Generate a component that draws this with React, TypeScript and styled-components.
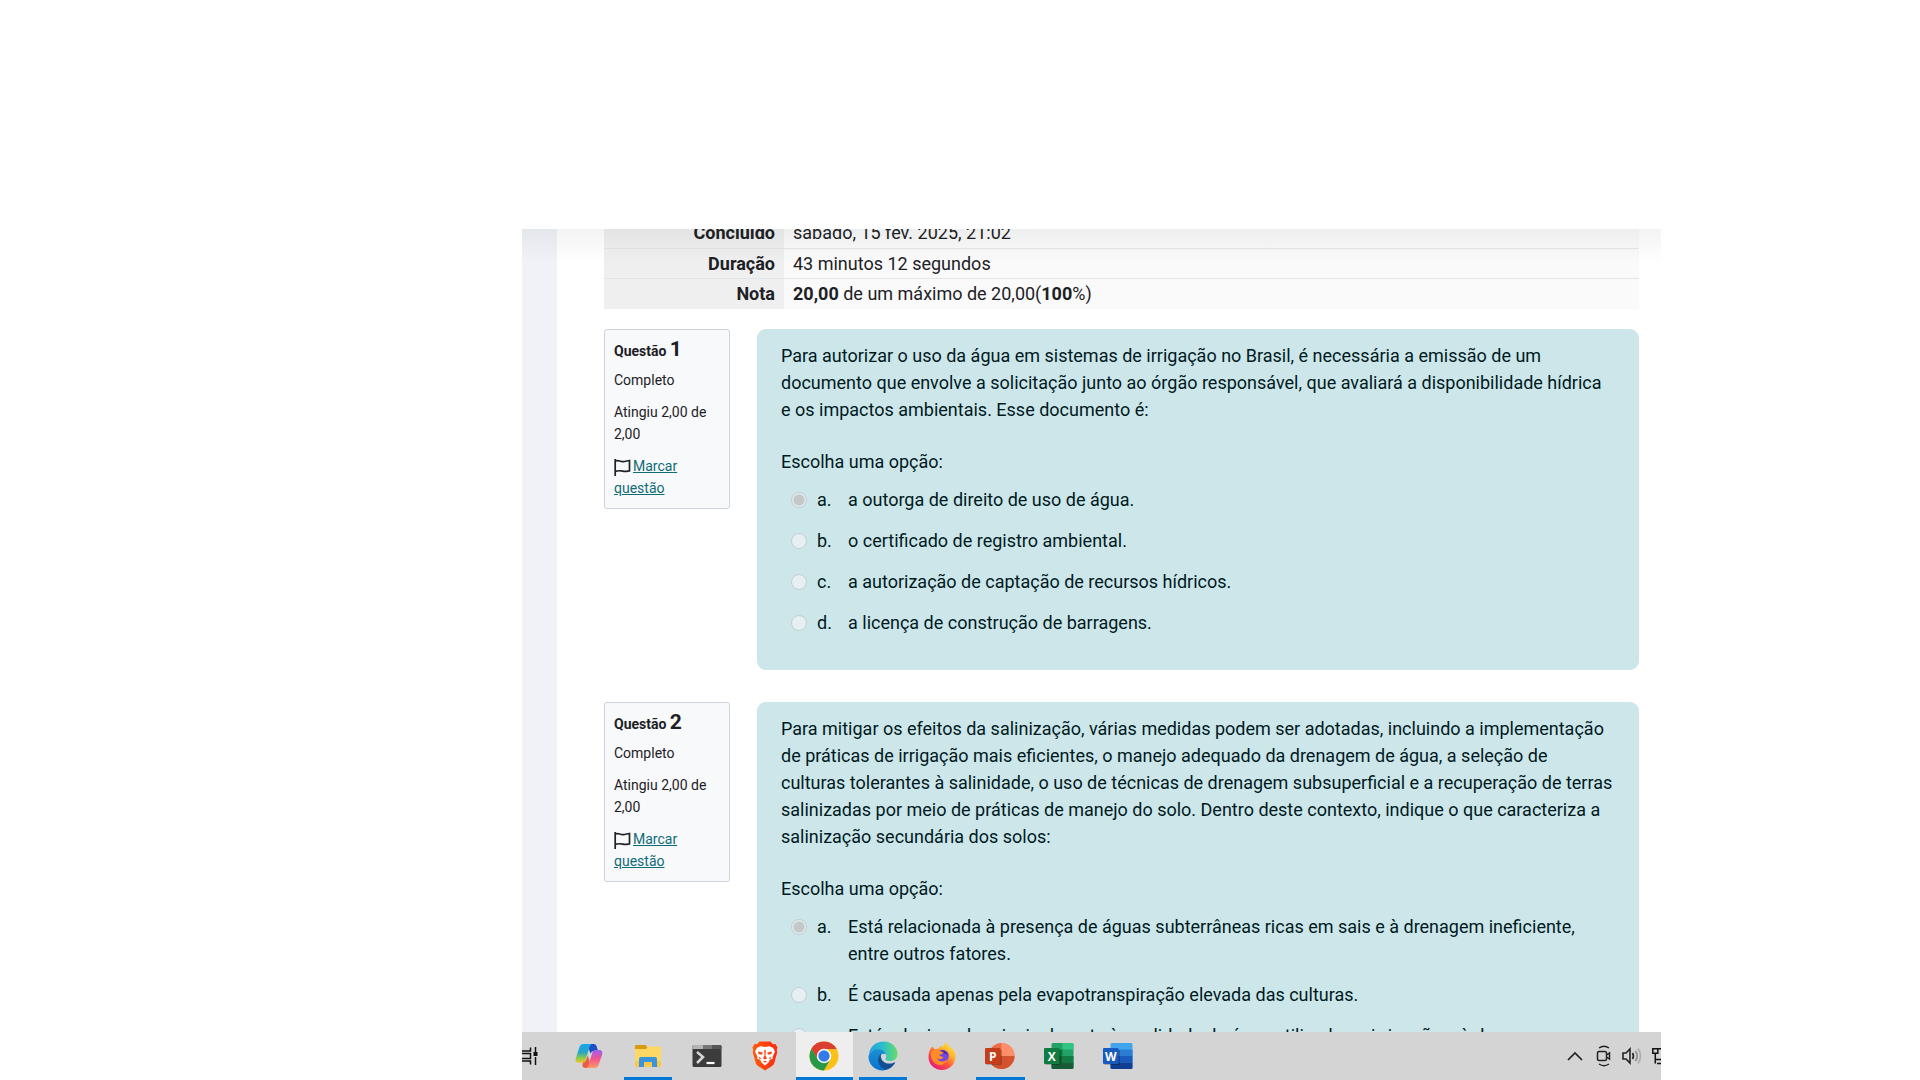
import React from "react";
import styled, { createGlobalStyle, css } from "styled-components";

const GlobalStyle = createGlobalStyle`
  * { box-sizing: border-box; }
  body { margin: 0; background: #fff; font-family: Roboto, "Liberation Sans", sans-serif; }
`;

const Screen = styled.div`
  display: flex;
  flex-direction: column;
  height: 100vh;
  padding: 229px 259px 0 522px;
  overflow: hidden;
  background: #fff;
  color: #1d2125;
`;

const Viewport = styled.div`
  position: relative;
  display: flex;
  flex: 1;
  min-height: 0;
  overflow: hidden;
  background: #f0f2f7;
  padding-left: 35px;
`;

const TopShade = styled.div`
  position: absolute;
  inset: 0 0 auto 0;
  height: 34px;
  background: linear-gradient(rgba(0, 20, 10, 0.05), rgba(0, 20, 10, 0));
`;

const Main = styled.main`
  flex: 1;
  min-width: 0;
  padding: 0 22px 0 47px;
  background: #fff;
`;

const Summary = styled.table`
  width: 100%;
  margin-top: -11px;
  margin-bottom: 20px;
  border-collapse: collapse;
  font-size: 18px;
  line-height: 27px;
  background: #fafafa;

  tr + tr { border-top: 1px solid #e3e5ea; }
  th, td { height: 30px; padding: 1px 9px; vertical-align: middle; }
  tr:last-child > * { height: 31px; }
  th { width: 180px; text-align: right; font-weight: 700; background: #efefef; }
  td { text-align: left; }
`;

const Question = styled.section`
  display: flex;
  align-items: flex-start;
  gap: 27px;
  margin-bottom: 32px;
`;

const Info = styled.aside`
  flex: 0 0 126px;
  height: 180px;
  padding: 8px 9px;
  border: 1px solid #cfd3dc;
  border-radius: 3px;
  background: #f8f9fb;
  font-size: 14px;
  line-height: 22px;
`;

const InfoTitle = styled.h3`
  margin: 0 0 6px;
  font-size: 14px;
  line-height: 23px;
  font-weight: 700;
`;

const Number = styled.span`
  font-size: 21px;
`;

const InfoText = styled.p`
  margin: 0 0 10px;
`;

const FlagLink = styled.a`
  color: #0f6c77;
`;

const FlagIcon = styled.svg`
  width: 17px;
  height: 18px;
  margin-right: 2px;
  vertical-align: -5px;
`;

const Panel = styled.div`
  flex: 1;
  min-width: 0;
  padding: 13px 24px 34px;
  border-radius: 9px;
  background: #cde6ea;
  color: #001a1e;
  font-size: 18px;
  line-height: 27px;
`;

const Prompt = styled.p`
  margin: 0 0 25px;
`;

const Options = styled.fieldset`
  display: flex;
  flex-direction: column;
  gap: 14px;
  min-width: 0;
  margin: 0;
  padding: 0;
  border: 0;
`;

const Legend = styled.legend`
  padding: 0 0 11px;
`;

const Option = styled.label`
  display: grid;
  grid-template-columns: 16px 21px 1fr;
  column-gap: 10px;
  padding-left: 10px;
`;

const Letter = styled.span``;

const Radio = styled.input`
  appearance: none;
  width: 16px;
  height: 16px;
  margin: 6px 0 0;
  border: 1px solid #c3cfd2;
  border-radius: 50%;
  background: #e6eff2;

  &:checked {
    background: radial-gradient(circle, #c3c8c9 0 5px, #e2e9eb 6px);
  }
`;

const Taskbar = styled.footer`
  display: flex;
  flex: 0 0 48px;
  justify-content: space-between;
  overflow: hidden;
  background: #d4d4d4;
`;

const Apps = styled.nav`
  display: grid;
  grid-template-columns: 38px repeat(10, 1fr);
  width: 625px;
`;

const AppButton = styled.button<{ $state?: "open" | "active" }>`
  display: flex;
  align-items: center;
  justify-content: center;
  margin: 0 ${(p) => (p.$state === "active" ? 1 : 5)}px;
  padding: 0;
  border: 0;
  border-bottom: 3px solid transparent;
  border-top: 3px solid transparent;
  background: none;
  ${(p) =>
    p.$state &&
    css`
      border-bottom-color: #0078d7;
    `}
  ${(p) =>
    p.$state === "active" &&
    css`
      background: #eeeeee;
      border-top-color: #eeeeee;
    `}

  svg { flex: none; width: 30px; height: 30px; }
`;

const TaskViewButton = styled.button`
  display: flex;
  align-items: center;
  padding: 0;
  border: 0;
  background: none;
`;

const Tray = styled.div`
  display: flex;
  align-items: center;
  gap: 10px;
`;

const TrayButton = styled.button<{ $width: number }>`
  display: flex;
  align-items: center;
  width: ${(p) => p.$width}px;
  padding: 0;
  border: 0;
  background: none;

  svg { flex: none; }
`;

const Flag = () => (
  <FlagIcon viewBox="0 0 17 18" fill="none" stroke="#1d2125" strokeWidth="1.7">
    <path d="M1.2 1v17M1.2 3c3-1.5 5 .9 7.700.6C12 3.400 13 2.700 15.500 2.500v10.300c-2.500.4-3.800 1-6.600.4-2.700-.6-4.700-1-7.700.3" />
  </FlagIcon>
);

const Copilot = () => (
  <svg viewBox="0 0 30 30">
    <defs>
      <linearGradient id="cpA" x1="0" y1="0" x2="0" y2="1">
        <stop offset="0" stopColor="#18a5ee" />
        <stop offset=".45" stopColor="#2aa6c4" />
        <stop offset=".75" stopColor="#8ccb50" />
        <stop offset="1" stopColor="#f6c51b" />
      </linearGradient>
      <linearGradient id="cpB" x1="0" y1="0" x2="0" y2="1">
        <stop offset="0" stopColor="#a35df0" />
        <stop offset=".5" stopColor="#f0548f" />
        <stop offset="1" stopColor="#ff9a62" />
      </linearGradient>
    </defs>
    <path fill="#1b4fc4" d="M13 3h6.500c2 0 2.800 1.200 3.300 2.900L24 10h-3.800c-2 0-3 1-3.600 2.800z" />
    <path fill="url(#cpA)" d="M9.500 3h8.200c-1.500 1-2 2.500-2.600 4.500l-3.300 11.300c-.6 2-1.600 2.900-3.600 2.900H5.100c-3 0-4-2-3.200-4.700L5.400 6.300C6 4.200 7.400 3 9.500 3z" />
    <path fill="#ef5a43" d="M9 21.500c2-.2 2.800-1.400 3.300-3l1.500-4 2.700 8.500L14 27h-2.500c-1.800 0-2.700-1-3.200-2.700z" />
    <path fill="url(#cpB)" d="M20.500 27h-8.200c1.500-1 2-2.500 2.600-4.500l3.300-10.300C18.800 10.200 19.800 9 21.800 9h3.100c3 0 4 2 3.200 4.700l-3.500 10C24 25.800 22.600 27 20.500 27z" />
  </svg>
);

const Explorer = () => (
  <svg viewBox="0 0 30 30">
    <path fill="#d99a0b" d="M2 5q0-1 1-1h9q1 0 1.500 1l1.500 3H2z" />
    <path fill="#ffd765" d="M2 8h11l2.500-2.500H27q1 0 1 1V25q0 1-1 1H3q-1 0-1-1z" />
    <path fill="#f9c84a" d="M2 20h26v5q0 1-1 1H3q-1 0-1-1z" />
    <path fill="#3b95dc" d="M6 26v-8q0-2 2-2h14q2 0 2 2v8h-5v-5h-8v5z" />
  </svg>
);

const Terminal = () => (
  <svg viewBox="0 0 30 30">
    <rect x=".5" y="4" width="29" height="22" rx="1.500" fill="#3c3c3c" />
    <path fill="#b4b4b4" d="M2 4h9v4H.500V5.500Q.5 4 2 4z" />
    <path fill="#777" d="M11 4h9v4h-9z" />
    <path fill="#565656" d="M20 4h8q1.500 0 1.500 1.500V8H20z" />
    <path d="M5 11l6 5-6 6" fill="none" stroke="#d5d5d5" strokeWidth="2.600" />
    <path d="M14.500 22h8" stroke="#fff" strokeWidth="2.200" />
  </svg>
);

const Brave = () => (
  <svg viewBox="0 0 30 30">
    <defs>
      <linearGradient id="brv">
        <stop stopColor="#ff5a0a" />
        <stop offset="1" stopColor="#ff2a12" />
      </linearGradient>
    </defs>
    <path fill="url(#brv)" d="M9.500.500h11l2.500 2.700 2.500-.2 2 3.500-.8 2.500.6 2-3 11c-.4 1.300-1.200 2.300-2.300 3L15 29.500l-7-4.500c-1.100-.7-1.900-1.700-2.300-3l-3-11 .6-2L2.500 6.500l2-3.500 2.500.2z" />
    <path fill="#fff" d="M10.500 5.200l4.500.8 4.500-.8 3.500 1.500 2 3.800-2.500 5.500.5 1.500-3.500 1.500-.5 2L15 24.500 11 21l-.5-2L7 17.500l.5-1.500L5 10.500l2-3.800z" />
    <path fill="#ff4515" d="M8 10.500l4.800 1-.8 2.200-3.500-.7zM22 10.500l-4.800 1 .8 2.200 3.500-.7zM14.200 9h1.600l-.3 5.500 1.500 3-2 1-2-1 1.500-3zM8.500 15.500l3 2-2 .5zM21.500 15.500l-3 2 2 .5zM13 20.500l2-.7 2 .7-2 1.300z" />
  </svg>
);

const Chrome = () => (
  <svg viewBox="0 0 30 30">
    <circle cx="15" cy="15" r="14.500" fill="#fbc116" />
    <path fill="#dc3e32" d="M15 8h12.700A14.500 14.500 0 0 0 2.400 7.800L8.800 18.500z" />
    <path fill="#279847" d="M2.440 7.750A14.500 14.500 0 0 0 14.900 29.500L21.200 18.500 8.900 18.500z" />
    <circle cx="15" cy="15" r="7.200" fill="#fff" />
    <circle cx="15" cy="15" r="5.700" fill="#347bea" />
  </svg>
);

const Edge = () => (
  <svg viewBox="0 0 30 30">
    <defs>
      <linearGradient id="edA">
        <stop stopColor="#239fdc" />
        <stop offset=".5" stopColor="#2dbfcb" />
        <stop offset="1" stopColor="#69dd65" />
      </linearGradient>
      <linearGradient id="edB" x1="0" y1="0" x2="0" y2="1">
        <stop stopColor="#1c90d4" />
        <stop offset="1" stopColor="#0872cf" />
      </linearGradient>
    </defs>
    <path fill="url(#edA)" d="M1 13C2 5.500 8 .500 15.500.500 24 .500 29.500 6.500 29.500 13c0 4.500-3.300 7-7.300 7-2.800 0-5-1-4.700-2 1.500-1.700 1.200-5.800-2-7.500C10 7.300 3.500 8.500 1 13z" />
    <path fill="url(#edB)" d="M.5 15.500C1.500 10.500 6 8 10.500 8.300c4 .2 7 2.700 7.500 5.200-4-2.200-7.200 1.300-6.800 5 .4 5.200 5 8.700 10.300 7.500-2 2-4.500 3.500-7 3.500C6.500 29.500.300 23 .5 15.500z" />
    <path fill="#124e94" d="M13 12.800c-5 4.200-3.500 13.200 4.700 16.200 4-1 7.300-3.500 9.300-7 .3-.7-.2-1-.9-.6-6.500 3.400-14.800-.6-13.100-8.600z" />
  </svg>
);

const Firefox = () => (
  <svg viewBox="0 0 30 30">
    <defs>
      <linearGradient id="ffA" x1="1" y1="0" x2=".25" y2="1">
        <stop stopColor="#fff04a" />
        <stop offset=".38" stopColor="#ffb62a" />
        <stop offset=".65" stopColor="#ff583c" />
        <stop offset="1" stopColor="#e6157c" />
      </linearGradient>
    </defs>
    <path fill="url(#ffA)" d="M5.500 5.500l2 2.700 4-.7c1-2 2.600-2.700 4-3l-1 3c1.500-1 2.500-4.500 5-6.500.5 3 3 4 4.500 6l1.800 1c2 2.700 2.900 5.200 2.700 8C28 23.500 22.500 29 15 29S1.500 23.500 1.500 16c0-4.300 1.500-8 4-10.500z" />
    <circle cx="15.500" cy="15" r="6.300" fill="#7547df" />
    <path fill="#4b27a6" d="M12 10.500c3-2.500 8-.5 9 3l-4-1z" />
    <path fill="#ff8c25" d="M4 11c2-3 6-2.500 8.500-1.300l4 1.500c-.5 2-3.500 2-4.500 3 1.300 1.500 4.200 1 4.200 2.300-1.700 2.500-4.700 2-6.200.5C10.500 21 17 21.500 20 18.500c-1.500 5-7 7-11 4.500-4-2.500-6-7.500-5-12z" />
  </svg>
);

const OfficeTile = ({ letter, fill }: { letter: string; fill: string }) => (
  <>
    <rect x="1" y="9" width="16" height="15" rx="1" fill="#000" opacity=".22" />
    <rect x="0" y="7" width="15.500" height="16" rx="1" fill={fill} />
    <text x="7.700" y="19.500" fill="#fff" fontSize="12" fontWeight="700" textAnchor="middle" fontFamily="Open Sans, sans-serif">
      {letter}
    </text>
  </>
);

const PowerPoint = () => (
  <svg viewBox="0 0 30 30">
    <circle cx="16.500" cy="15" r="13" fill="#ed6c47" />
    <path fill="#ff8f6b" d="M16.500 2a13 13 0 0 1 13 13h-13z" />
    <path fill="#d35230" d="M3.500 15h26a13 13 0 0 1-26 0z" />
    <OfficeTile letter="P" fill="#c43e1c" />
  </svg>
);

const Excel = () => (
  <svg viewBox="0 0 30 30">
    <rect x="7.500" y="2" width="22" height="26" rx="1.500" fill="#21a366" />
    <path fill="#33c481" d="M18.500 2H28q1.500 0 1.500 1.500v5h-11z" />
    <path fill="#107c41" d="M7.500 8.500h11V15h-11zM18.500 15h11v6.500h-11z" />
    <path fill="#185c37" d="M7.500 15h11v6.500h11v5q0 1.500-1.500 1.500H9q-1.500 0-1.500-1.500z" />
    <OfficeTile letter="X" fill="#107c41" />
  </svg>
);

const Word = () => (
  <svg viewBox="0 0 30 30">
    <rect x="7.500" y="2" width="22" height="26" rx="1.500" fill="#41a5ee" />
    <path fill="#2b7cd3" d="M7.500 8.500h22V15h-22z" />
    <path fill="#185abd" d="M7.500 15h22v6.500h-22z" />
    <path fill="#103f91" d="M7.500 21.500h22v5q0 1.500-1.500 1.500H9q-1.500 0-1.500-1.500z" />
    <OfficeTile letter="W" fill="#185abd" />
  </svg>
);

const TaskView = () => (
  <svg width="17" height="20" viewBox="0 0 17 20" fill="none" stroke="#111" strokeWidth="1.500">
    <path d="M0 5h8.500V1.500M0 15h8.500v3.500M0 7.500h8.500v5H0M13.500 1v5M13.500 11v8" />
    <path fill="#111" stroke="none" d="M11.500 6h4v4h-4z" />
  </svg>
);

type QuestionData = { number: number; prompt: string; options: string[] };

const questions: QuestionData[] = [
  {
    number: 1,
    prompt:
      "Para autorizar o uso da água em sistemas de irrigação no Brasil, é necessária a emissão de um documento que envolve a solicitação junto ao órgão responsável, que avaliará a disponibilidade hídrica e os impactos ambientais. Esse documento é:",
    options: [
      "a outorga de direito de uso de água.",
      "o certificado de registro ambiental.",
      "a autorização de captação de recursos hídricos.",
      "a licença de construção de barragens.",
    ],
  },
  {
    number: 2,
    prompt:
      "Para mitigar os efeitos da salinização, várias medidas podem ser adotadas, incluindo a implementação de práticas de irrigação mais eficientes, o manejo adequado da drenagem de água, a seleção de culturas tolerantes à salinidade, o uso de técnicas de drenagem subsuperficial e a recuperação de terras salinizadas por meio de práticas de manejo do solo. Dentro deste contexto, indique o que caracteriza a salinização secundária dos solos:",
    options: [
      "Está relacionada à presença de águas subterrâneas ricas em sais e à drenagem ineficiente, entre outros fatores.",
      "É causada apenas pela evapotranspiração elevada das culturas.",
      "Está relacionada principalmente à qualidade da água utilizada na irrigação e à drenagem.",
    ],
  },
];

const apps: { name: string; icon: React.ReactNode; state?: "open" | "active" }[] = [
  { name: "Copilot", icon: <Copilot /> },
  { name: "Explorador de Arquivos", icon: <Explorer />, state: "open" },
  { name: "Terminal", icon: <Terminal /> },
  { name: "Brave", icon: <Brave /> },
  { name: "Chrome", icon: <Chrome />, state: "active" },
  { name: "Edge", icon: <Edge />, state: "open" },
  { name: "Firefox", icon: <Firefox /> },
  { name: "PowerPoint", icon: <PowerPoint />, state: "open" },
  { name: "Excel", icon: <Excel /> },
  { name: "Word", icon: <Word /> },
];

const QuestionBlock = ({ number, prompt, options }: QuestionData) => (
  <Question>
    <Info>
      <InfoTitle>
        Questão <Number>{number}</Number>
      </InfoTitle>
      <InfoText>Completo</InfoText>
      <InfoText>Atingiu 2,00 de 2,00</InfoText>
      <Flag />
      <FlagLink href="#">Marcar questão</FlagLink>
    </Info>
    <Panel>
      <Prompt>{prompt}</Prompt>
      <Options>
        <Legend>Escolha uma opção:</Legend>
        {options.map((text, i) => (
          <Option key={text} htmlFor={`q${number}-${i}`}>
            <Radio id={`q${number}-${i}`} type="radio" name={`q${number}`} disabled defaultChecked={i === 0} />
            <Letter>{"abcd"[i]}.</Letter>
            <span>{text}</span>
          </Option>
        ))}
      </Options>
    </Panel>
  </Question>
);

export default function App() {
  return (
    <Screen>
      <GlobalStyle />
      <Viewport>
        <Main>
          <Summary>
            <tbody>
              <tr>
                <th scope="row">Concluído</th>
                <td>sábado, 15 fev. 2025, 21:02</td>
              </tr>
              <tr>
                <th scope="row">Duração</th>
                <td>43 minutos 12 segundos</td>
              </tr>
              <tr>
                <th scope="row">Nota</th>
                <td>
                  <b>20,00</b> de um máximo de 20,00(<b>100</b>%)
                </td>
              </tr>
            </tbody>
          </Summary>
          {questions.map((q) => (
            <QuestionBlock key={q.number} {...q} />
          ))}
        </Main>
        <TopShade />
      </Viewport>
      <Taskbar>
        <Apps>
          <TaskViewButton aria-label="Visão de tarefas">
            <TaskView />
          </TaskViewButton>
          {apps.map((app) => (
            <AppButton key={app.name} aria-label={app.name} $state={app.state}>
              {app.icon}
            </AppButton>
          ))}
        </Apps>
        <Tray>
          <TrayButton $width={19} aria-label="Mostrar ícones ocultos">
            <svg width="16" height="16" viewBox="0 0 16 16" fill="none" stroke="#222" strokeWidth="1.700">
              <path d="M1 12l7-7 7 7" />
            </svg>
          </TrayButton>
          <TrayButton $width={16} aria-label="Câmera">
            <svg width="16" height="22" viewBox="0 0 16 22" fill="none" stroke="#222" strokeWidth="1.500">
              <path d="M3 3c3-2 7-2 10 0M3 19c3 2 7 2 10 0M3 6.500h6q1.500 0 1.500 1.500v6q0 1.500-1.500 1.500H3q-1.500 0-1.500-1.500V8Q1.500 6.500 3 6.500zM10.500 10l3-2v6l-3-2" />
            </svg>
          </TrayButton>
          <TrayButton $width={20} aria-label="Volume">
            <svg width="20" height="18" viewBox="0 0 20 18" fill="none" stroke="#222" strokeWidth="1.600">
              <path d="M1 6h3l4-4v14l-4-4H1zM10.500 6q2 3 0 6" />
              <path stroke="#888" d="M13.500 4q3.500 5 0 10" />
              <path stroke="#aaa" d="M16 1.500q5 7.500 0 15" />
            </svg>
          </TrayButton>
          <TrayButton $width={9} aria-label="Rede">
            <svg width="9" height="18" viewBox="0 0 9 18" fill="none" stroke="#111" strokeWidth="1.500">
              <path d="M.8 1.800h5v4.500h-5zM6 1.800h3M3.300 6v10.500M3.300 12.500H9M5 16.500h4" />
            </svg>
          </TrayButton>
        </Tray>
      </Taskbar>
    </Screen>
  );
}
